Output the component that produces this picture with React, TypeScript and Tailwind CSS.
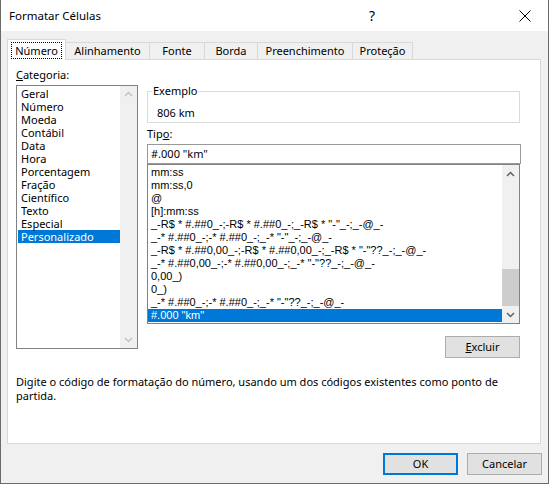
import React from "react";

const font = { fontFamily: '"Noto Sans", "Liberation Sans", sans-serif' };

function Chevron({ up, color }: { up?: boolean; color: string }) {
  return (
    <svg width="9" height="6" viewBox="0 0 9 6">
      <path
        d={up ? "M1 5 L4.5 1.5 L8 5" : "M1 1 L4.5 4.5 L8 1"}
        fill="none"
        stroke={color}
        strokeWidth="1.5"
      />
    </svg>
  );
}

const categories = [
  "Geral",
  "Número",
  "Moeda",
  "Contábil",
  "Data",
  "Hora",
  "Porcentagem",
  "Fração",
  "Científico",
  "Texto",
  "Especial",
  "Personalizado",
];

const types = [
  "mm:ss",
  "mm:ss,0",
  "@",
  "[h]:mm:ss",
  '_-R$ * #.##0_-;-R$ * #.##0_-;_-R$ * "-"_-;_-@_-',
  '_-* #.##0_-;-* #.##0_-;_-* "-"_-;_-@_-',
  '_-R$ * #.##0,00_-;-R$ * #.##0,00_-;_-R$ * "-"??_-;_-@_-',
  '_-* #.##0,00_-;-* #.##0,00_-;_-* "-"??_-;_-@_-',
  "0,00_)",
  "0_)",
  '_-* #.##0_-;-* #.##0_-;_-* "-"??_-;_-@_-',
  '#.000 "km"',
];

const tabs = [
  { label: "Alinhamento", w: "w-[83px]" },
  { label: "Fonte", w: "w-[55px]" },
  { label: "Borda", w: "w-[53px]" },
  { label: "Preenchimento", w: "w-[95px]" },
  { label: "Proteção", w: "w-[61px]" },
];

export default function App() {
  return (
    <div
      className="w-[549px] h-[484px] bg-[#f0f0f0] border-l border-r border-b border-[#6b6b6b] flex flex-col text-[11px] text-black overflow-hidden"
      style={font}
    >
      {/* Title bar */}
      <div className="h-[31px] bg-white flex items-center pl-[8px] shrink-0">
        <span className="text-[11.5px]">Formatar Células</span>
        <div className="ml-auto w-[46px] h-[31px] flex items-center justify-center text-[14px] mr-[107px]">
          ?
        </div>
        <div className="w-[46px] h-[31px] flex items-center justify-center mr-[0px]">
          <svg width="12" height="12" viewBox="0 0 12 12">
            <path d="M0.5 0.5 L11.5 11.5 M11.5 0.5 L0.5 11.5" stroke="#000" strokeWidth="1" />
          </svg>
        </div>
      </div>

      {/* Tabs */}
      <div className="mt-[8px] ml-[6px] flex items-end h-[21px] -mb-px relative z-10 shrink-0">
        <div className="w-[59px] h-[21px] bg-white border-t border-l border-r border-[#d9d9d9] flex items-center justify-center">
          <span className="border border-dotted border-black px-[3px] leading-[15px] mt-[1px]">Número</span>
        </div>
        {tabs.map((t, i) => (
          <div
            key={t.label}
            className={`${t.w} h-[18px] bg-[#f0f0f0] border-t border-b border-[#d9d9d9] flex items-center justify-center ${
              i === tabs.length - 1 ? "border-r" : ""
            } ${i === 0 ? "" : "border-l"}`}
          >
            {t.label}
          </div>
        ))}
      </div>

      {/* Panel */}
      <div className="ml-[6px] w-[534px] h-[385px] bg-white border border-[#d9d9d9] flex flex-col pt-[8px] px-[8px] shrink-0">
        <div className="flex">
          {/* Left column */}
          <div className="w-[122px] flex flex-col">
            <div className="h-[14px] leading-[14px]">
              <span className="underline">C</span>ategoria:
            </div>
            <div className="mt-[3px] h-[264px] border border-[#828282] flex">
              <div className="flex-1 pt-[1px] pl-[1px]">
                {categories.map((c) => (
                  <div
                    key={c}
                    className={`h-[13px] leading-[13px] pl-[3px] ${
                      c === "Personalizado" ? "bg-[#0078d7] text-white" : ""
                    }`}
                  >
                    {c}
                  </div>
                ))}
              </div>
              <div className="w-[17px] bg-[#f0f0f0] flex flex-col items-center justify-between py-[5px]">
                <Chevron up color="#c2c2c2" />
                <Chevron color="#c2c2c2" />
              </div>
            </div>
          </div>

          {/* Right column */}
          <div className="ml-[9px] w-[373px] flex flex-col">
            <div className="mt-[23px] h-[32px] border border-[#dcdcdc] relative">
              <span className="absolute left-[4px] top-[-8px] bg-white px-[1px] leading-[14px]">Exemplo</span>
              <div className="pl-[9px] pt-[14px] leading-[14px]">806 km</div>
            </div>
            <div className="mt-[4px] h-[14px] leading-[14px]">
              Tip<span className="underline">o</span>:
            </div>
            <div className="mt-[3px] w-[374px] h-[20px] border border-[#999999] flex items-center pl-[3px]">
              #.000 "km"
            </div>
            <div className="h-[160px] border border-[#828282] flex">
              <div
                className="flex-1 pt-[1px] overflow-hidden text-[11px]"
                style={{ fontFamily: '"Liberation Sans", Arial, sans-serif' }}
              >
                {types.map((t, i) => (
                  <div
                    key={i}
                    className={`h-[13px] leading-[13px] pl-[3px] whitespace-pre ${
                      i === types.length - 1 ? "bg-[#0078d7] text-white" : ""
                    }`}
                  >
                    {t}
                  </div>
                ))}
              </div>
              <div className="w-[17px] bg-[#f0f0f0] flex flex-col items-center">
                <div className="h-[17px] flex items-center justify-center">
                  <Chevron up color="#606060" />
                </div>
                <div className="flex-1 w-full flex flex-col justify-end">
                  <div className="h-[37px] w-full bg-[#cdcdcd]" />
                </div>
                <div className="h-[17px] flex items-center justify-center">
                  <Chevron color="#606060" />
                </div>
              </div>
            </div>
            <div className="mt-[12px] self-end w-[75px] h-[22px] bg-[#e1e1e1] border border-[#adadad] flex items-center justify-center">
              <span className="underline">E</span>xcluir
            </div>
          </div>
        </div>
        <div className="mt-[17px] leading-[14px] w-[500px]">
          Digite o código de formatação do número, usando um dos códigos existentes como ponto de
          partida.
        </div>
      </div>

      {/* Buttons */}
      <div className="mt-[9px] flex justify-end gap-[9px] mr-[6px]">
        <div className="w-[75px] h-[22px] bg-[#e1e1e1] border-2 border-[#0078d7] flex items-center justify-center">
          OK
        </div>
        <div className="w-[75px] h-[22px] bg-[#e1e1e1] border border-[#adadad] flex items-center justify-center">
          Cancelar
        </div>
      </div>
    </div>
  );
}
